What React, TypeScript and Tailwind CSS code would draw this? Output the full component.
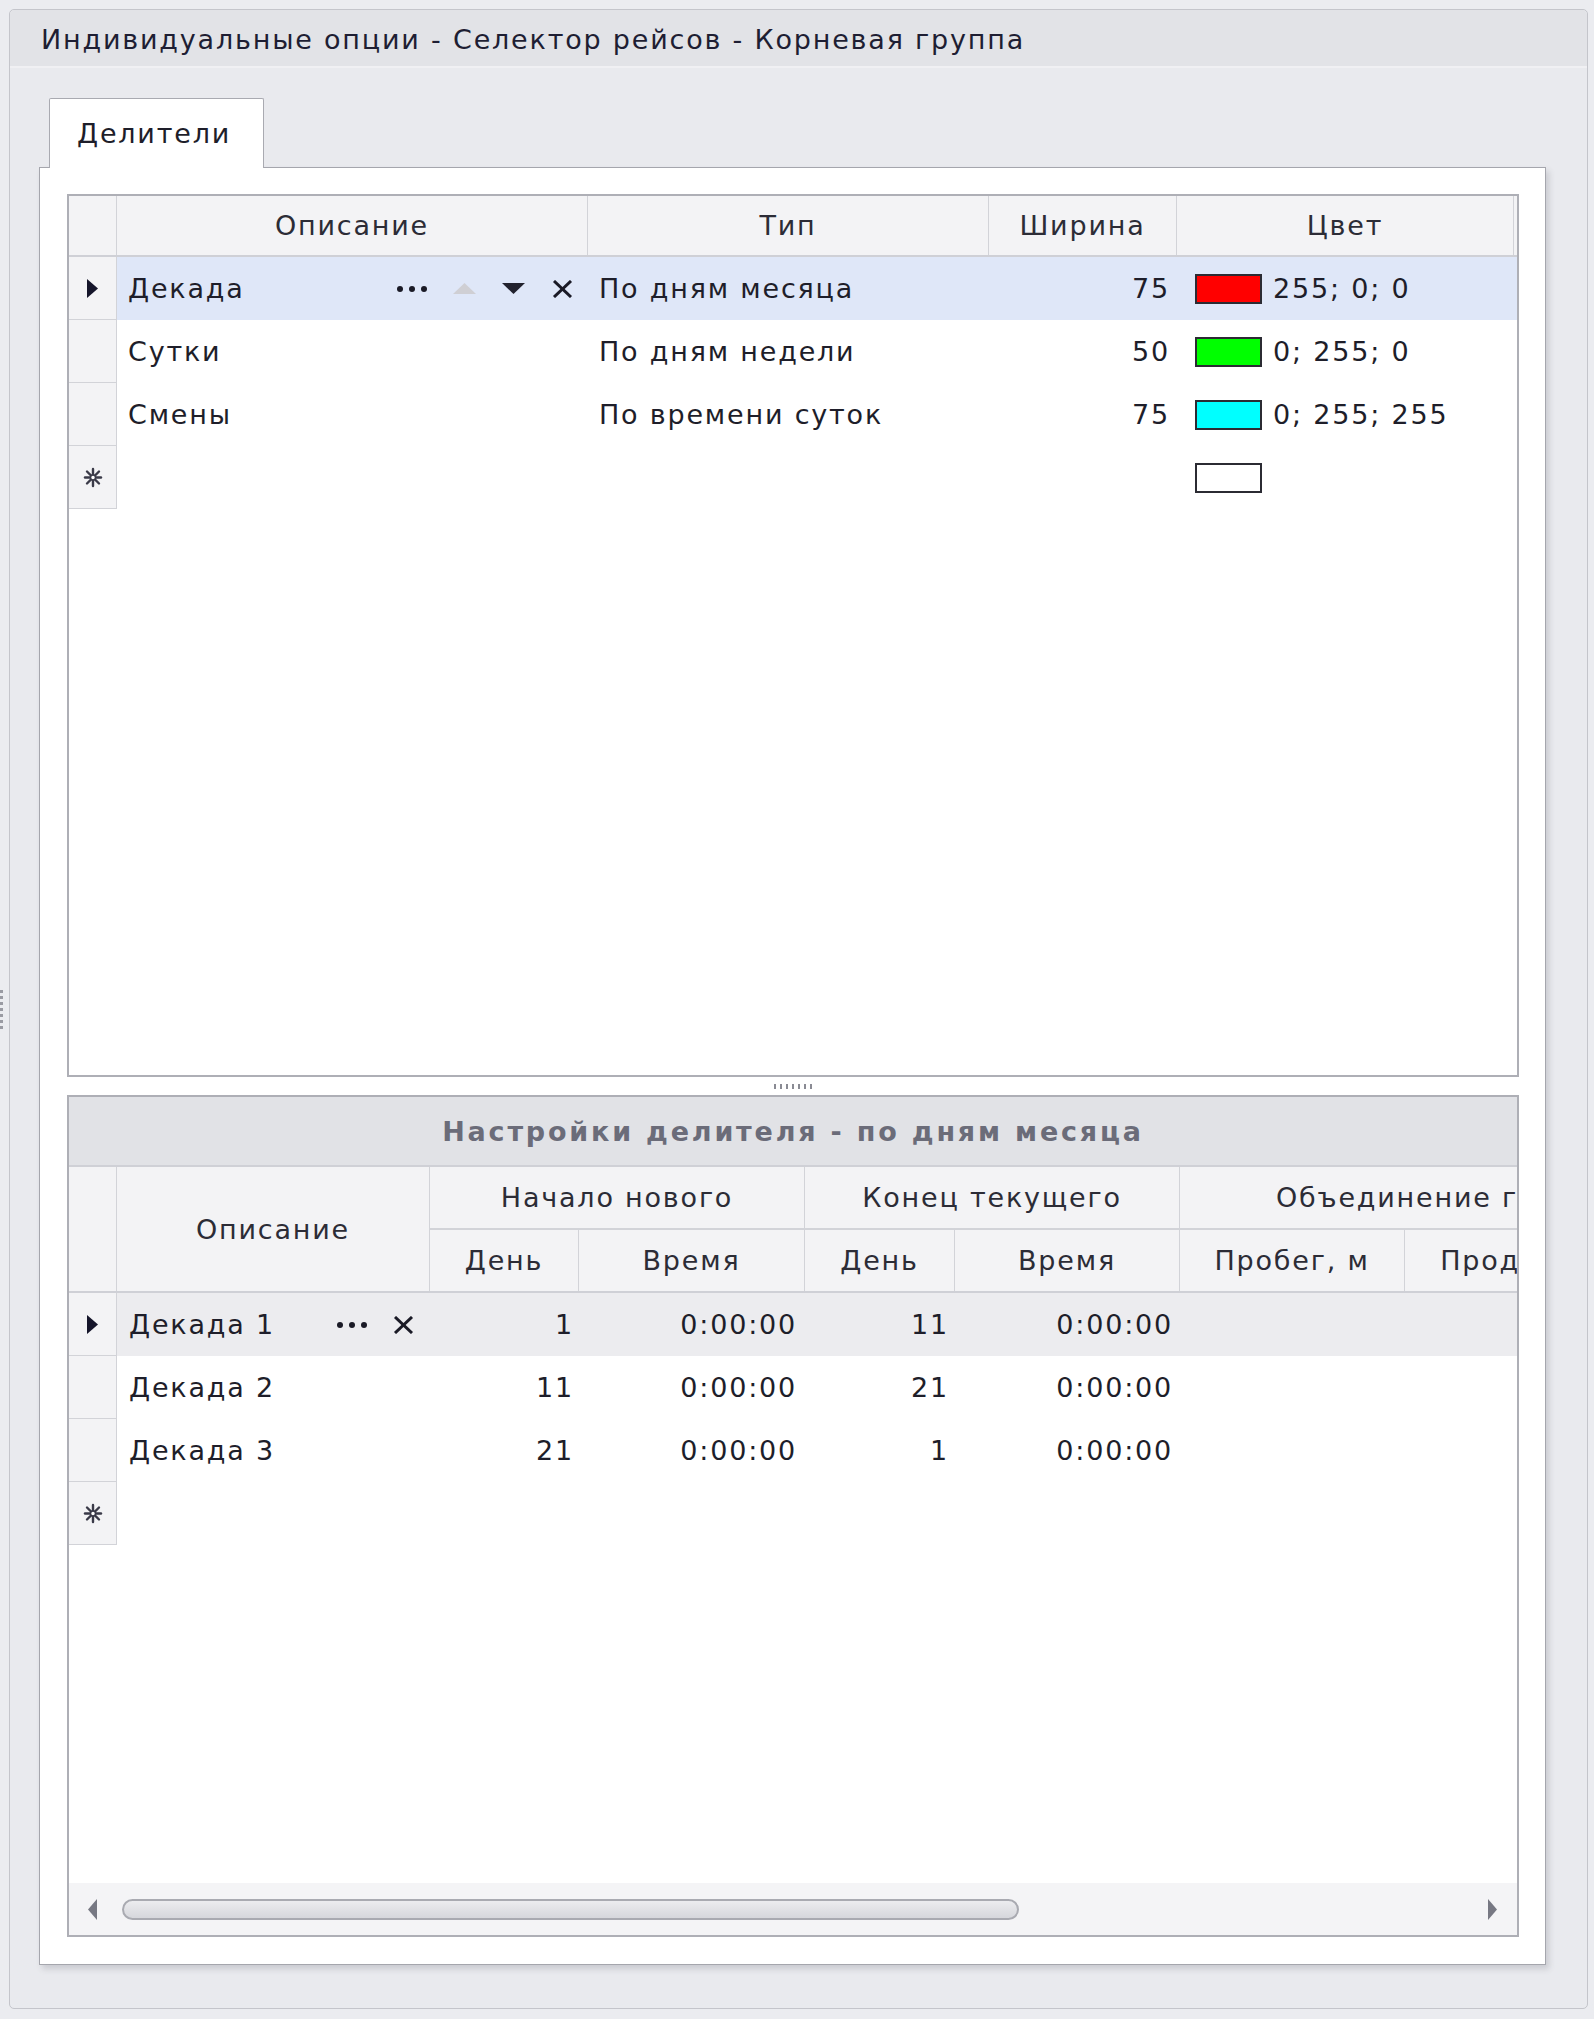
import React from 'react';

const topCols = 'grid grid-cols-[48px_471px_401px_188px_337px_1fr]';
const botCols = 'grid grid-cols-[48px_313px_149px_226px_150px_225px_225px_225px_225px] w-[1786px]';

const RowArrow = () => (
  <svg width="13" height="19" viewBox="0 0 13 19">
    <polygon points="1,0 12,9.5 1,19" fill="#15152a" />
  </svg>
);

const NewRowMark = () => (
  <svg width="20" height="21" viewBox="0 0 20 21" stroke="#3a3a48" strokeWidth="2.4" strokeLinecap="round">
    <line x1="10" y1="2" x2="10" y2="19" />
    <line x1="2" y1="10.5" x2="18" y2="10.5" />
    <line x1="4" y1="4.5" x2="16" y2="16.5" />
    <line x1="16" y1="4.5" x2="4" y2="16.5" />
    <circle cx="10" cy="10.5" r="2.5" fill="#fff" strokeWidth="1.5" />
  </svg>
);

const Dots = () => (
  <span className="flex items-center gap-[6px] w-[31px]">
    <span className="w-[6px] h-[6px] bg-[#1a1a26] rounded-full" />
    <span className="w-[6px] h-[6px] bg-[#1a1a26] rounded-full" />
    <span className="w-[6px] h-[6px] bg-[#1a1a26] rounded-full" />
  </span>
);

const Cross = () => (
  <svg width="25" height="18" viewBox="0 0 25 18" stroke="#1a1a26" strokeWidth="3">
    <line x1="4" y1="1" x2="21" y2="17" />
    <line x1="21" y1="1" x2="4" y2="17" />
  </svg>
);

const Tri = ({ up, color }: { up?: boolean; color: string }) => (
  <svg width="23" height="11" viewBox="0 0 23 11">
    <polygon points={up ? '11.5,0 23,11 0,11' : '0,0 23,0 11.5,11'} fill={color} />
  </svg>
);

const Swatch = ({ color }: { color: string }) => (
  <span className={`w-[67px] h-[30px] border-2 border-[#2b2b33] ${color}`} />
);

const IndCell = ({ children }: { children?: React.ReactNode }) => (
  <div className="flex items-center justify-center bg-[#f3f3f5] border-r border-b border-[#d2d3d8]">{children}</div>
);

const HeadCell = ({ children, className = '' }: { children?: React.ReactNode; className?: string }) => (
  <div className={`flex items-center justify-center whitespace-nowrap overflow-hidden bg-[#f3f3f5] border-r border-[#d2d3d8] text-[#2c2c36] ${className}`}>
    {children}
  </div>
);

const topRows = [
  { name: 'Декада', type: 'По дням месяца', width: '75', sw: 'bg-[#ff0000]', rgb: '255; 0; 0' },
  { name: 'Сутки', type: 'По дням недели', width: '50', sw: 'bg-[#00ff00]', rgb: '0; 255; 0' },
  { name: 'Смены', type: 'По времени суток', width: '75', sw: 'bg-[#00ffff]', rgb: '0; 255; 255' },
];

const botRows = [
  { name: 'Декада 1', d1: '1', t1: '0:00:00', d2: '11', t2: '0:00:00' },
  { name: 'Декада 2', d1: '11', t1: '0:00:00', d2: '21', t2: '0:00:00' },
  { name: 'Декада 3', d1: '21', t1: '0:00:00', d2: '1', t2: '0:00:00' },
];

function TopGrid() {
  return (
    <div className="h-[883px] shrink-0 border-2 border-[#aeafb6] bg-white flex flex-col">
      <div className={`${topCols} h-[61px] border-b-2 border-[#cfd0d6]`}>
        <HeadCell />
        <HeadCell>Описание</HeadCell>
        <HeadCell>Тип</HeadCell>
        <HeadCell>Ширина</HeadCell>
        <HeadCell>Цвет</HeadCell>
        <HeadCell className="border-r-0" />
      </div>
      {topRows.map((r, i) => (
        <div key={r.name} className={`${topCols} h-[63px]`}>
          <IndCell>{i === 0 && <RowArrow />}</IndCell>
          <div className={`flex items-center pl-[11px] pr-[13px] ${i === 0 ? 'bg-[#dfe7f8]' : ''}`}>
            <span>{r.name}</span>
            {i === 0 && (
              <span className="ml-auto flex items-center">
                <Dots />
                <span className="ml-[25px]"><Tri up color="#cfcfd4" /></span>
                <span className="ml-[26px]"><Tri color="#22222e" /></span>
                <span className="ml-[25px]"><Cross /></span>
              </span>
            )}
          </div>
          <div className={`flex items-center pl-[11px] ${i === 0 ? 'bg-[#dfe7f8]' : ''}`}>{r.type}</div>
          <div className={`flex items-center justify-end pr-[7px] ${i === 0 ? 'bg-[#dfe7f8]' : ''}`}>{r.width}</div>
          <div className={`flex items-center pl-[18px] gap-[11px] ${i === 0 ? 'bg-[#dfe7f8]' : ''}`}>
            <Swatch color={r.sw} />
            <span>{r.rgb}</span>
          </div>
          <div className={i === 0 ? 'bg-[#dfe7f8]' : ''} />
        </div>
      ))}
      <div className={`${topCols} h-[63px]`}>
        <IndCell><NewRowMark /></IndCell>
        <div />
        <div />
        <div />
        <div className="flex items-center pl-[18px]">
          <Swatch color="bg-white" />
        </div>
      </div>
    </div>
  );
}

function BottomGrid() {
  return (
    <div className="flex-1 min-w-0 border-2 border-[#aeafb6] bg-white flex flex-col overflow-hidden">
      <div className="h-[70px] shrink-0 flex items-center justify-center bg-[#e1e2e6] border-b-2 border-[#cfd0d6] font-bold tracking-[2.8px] text-[#6b6c79]">
        Настройки делителя - по дням месяца
      </div>
      <div className={`${botCols} grid-rows-[63px_61px] border-b-2 border-[#cfd0d6] shrink-0`}>
        <HeadCell className="row-span-2" />
        <HeadCell className="row-span-2">Описание</HeadCell>
        <HeadCell className="col-span-2 border-b-2">Начало нового</HeadCell>
        <HeadCell className="col-span-2 border-b-2">Конец текущего</HeadCell>
        <HeadCell className="col-span-3 border-b-2">Объединение границ периода</HeadCell>
        <HeadCell>День</HeadCell>
        <HeadCell>Время</HeadCell>
        <HeadCell>День</HeadCell>
        <HeadCell>Время</HeadCell>
        <HeadCell>Пробег, м</HeadCell>
        <HeadCell>Продолж.</HeadCell>
        <HeadCell>Интервал</HeadCell>
      </div>
      {botRows.map((r, i) => {
        const bg = i === 0 ? 'bg-[#ececef]' : '';
        return (
          <div key={r.name} className={`${botCols} h-[63px] shrink-0`}>
            <IndCell>{i === 0 && <RowArrow />}</IndCell>
            <div className={`flex items-center pl-[12px] pr-[14px] ${bg}`}>
              <span>{r.name}</span>
              {i === 0 && (
                <span className="ml-auto flex items-center">
                  <Dots />
                  <span className="ml-[23px]"><Cross /></span>
                </span>
              )}
            </div>
            <div className={`flex items-center justify-end pr-[5px] ${bg}`}>{r.d1}</div>
            <div className={`flex items-center justify-end pr-[8px] ${bg}`}>{r.t1}</div>
            <div className={`flex items-center justify-end pr-[6px] ${bg}`}>{r.d2}</div>
            <div className={`flex items-center justify-end pr-[7px] ${bg}`}>{r.t2}</div>
            <div className={bg} />
            <div className={bg} />
            <div className={bg} />
          </div>
        );
      })}
      <div className={`${botCols} h-[63px] shrink-0`}>
        <IndCell><NewRowMark /></IndCell>
      </div>
      <div className="flex-1" />
      <div className="h-[52px] shrink-0 bg-[#f4f4f6] flex items-center pl-[19px] pr-[20px]">
        <svg width="9" height="21" viewBox="0 0 9 21">
          <polygon points="9,0 0,10.5 9,21" fill="#777883" />
        </svg>
        <div className="ml-[25px] w-[897px] h-[21px] rounded-full border-2 border-[#a9aab1] bg-gradient-to-b from-[#ececef] to-[#d6d7dc]" />
        <svg className="ml-auto" width="9" height="21" viewBox="0 0 9 21">
          <polygon points="0,0 9,10.5 0,21" fill="#777883" />
        </svg>
      </div>
    </div>
  );
}

export default function App() {
  return (
    <div className="flex w-[1594px] h-[2019px] overflow-hidden bg-[#ebecf0] font-['DejaVu_Sans',sans-serif] text-[27px] tracking-[1.8px] leading-none text-[#1e1e2a]">
      <div className="w-[9px] shrink-0 flex items-center">
        <div className="flex flex-col gap-[3px]">
          {[0, 1, 2, 3, 4, 5, 6].map((k) => (
            <span key={k} className="w-[3px] h-[3px] bg-[#9a9ba3]" />
          ))}
        </div>
      </div>
      <div className="w-[1579px] shrink-0 min-w-0 mt-[9px] mb-[10px] flex flex-col rounded-[5px] border border-[#c4c5cb] bg-[#e9eaee]">
        <div className="h-[58px] shrink-0 flex items-center pl-[31px] pt-[2px] rounded-t-[5px] bg-[#e2e3e7] border-b-2 border-[#f0f0f3] text-[#1e1e33]">
          Индивидуальные опции - Селектор рейсов - Корневая группа
        </div>
        <div className="flex-1 min-w-0 flex flex-col pl-[29px] pr-[41px] pt-[30px] pb-[43px]">
          <div className="flex pl-[10px]">
            <div className="relative z-10 -mb-px h-[70px] w-[215px] flex items-center pl-[27px] bg-white border border-b-0 border-[#a9aab1] rounded-t-[2px]">
              Делители
            </div>
          </div>
          <div className="flex-1 min-w-0 flex flex-col bg-white border border-[#a5a6ad] shadow-[3px_4px_6px_rgba(60,60,80,0.18)] pl-[27px] pr-[26px] pt-[26px] pb-[27px]">
            <TopGrid />
            <div className="h-[18px] shrink-0 flex items-center justify-center gap-[4px]">
              {[0, 1, 2, 3, 4, 5, 6].map((k) => (
                <span key={k} className="w-[2px] h-[5px] bg-[#8a8b94]" />
              ))}
            </div>
            <BottomGrid />
          </div>
        </div>
      </div>
    </div>
  );
}
